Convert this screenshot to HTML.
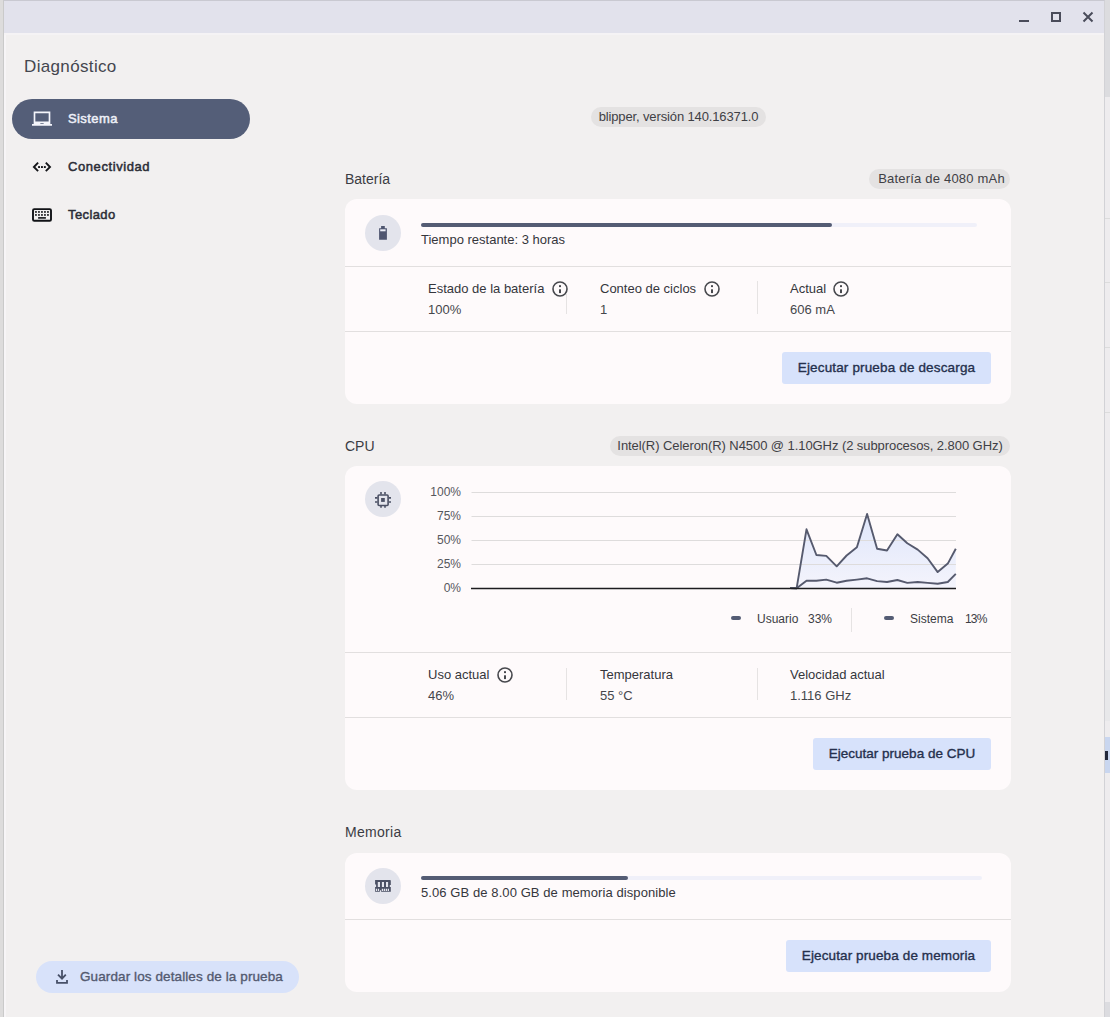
<!DOCTYPE html>
<html><head><meta charset="utf-8">
<style>
*{margin:0;padding:0;box-sizing:border-box}
html,body{width:1110px;height:1017px;overflow:hidden;background:#dddcdc;font-family:"Liberation Sans",sans-serif}
.abs{position:absolute}
#win{position:absolute;left:3px;top:0;width:1102px;height:1017px;background:#f2f0f0;border-left:1px solid #cacaca;border-right:1px solid #d2d2d6;border-top:1px solid #c9c9d1}
#title{position:absolute;left:4px;top:1px;width:1100px;height:32px;background:#e2e2ec}
.t{position:absolute;white-space:nowrap;line-height:1}
.nav-t{font-size:13px;-webkit-text-stroke:0.5px currentColor;letter-spacing:0.4px;color:#2b2d36}
.sec-t{font-size:14px;color:#3b3c43}
.chip{position:absolute;height:20px;border-radius:10px;background:#e4e2e2;color:#3f4045;font-size:13px;line-height:20px;white-space:nowrap}
.card{position:absolute;left:345px;width:666px;background:#fefafb;border-radius:12px}
.hr{position:absolute;left:345px;width:666px;height:1px;background:#e2dfdf}
.circ{position:absolute;left:365px;width:36px;height:36px;border-radius:50%;background:#e3e4ec}
.lbl{font-size:13px;color:#35363c}
.val{font-size:13px;color:#45464b}
.vsep{position:absolute;width:1px;background:#e6e3e3}
.btn{position:absolute;height:32px;border-radius:3px;background:#d7e2fb;color:#25304d;font-size:13.5px;-webkit-text-stroke:0.35px currentColor;line-height:32px;text-align:center;white-space:nowrap}
.track{position:absolute;left:421px;width:560px;height:4px;border-radius:2px;background:#f0f0f9}
.fill{position:absolute;left:0;top:0;height:4px;border-radius:2px;background:#545c74}
</style></head><body>
<div id="win"></div>
<div class="abs" style="left:4px;top:33px;width:2px;height:984px;background:#f7f5f7"></div>
<div id="title"></div>
<div class="abs" style="left:4px;top:33px;width:1100px;height:2px;background:#f5f3f5"></div>
<!-- window controls -->
<div class="abs" style="left:1019px;top:20px;width:10px;height:2px;background:#4a4c5a"></div>
<div class="abs" style="left:1051px;top:12px;width:10px;height:10px;border:2px solid #4a4c5a"></div>
<svg class="abs" style="left:1082px;top:11px" width="12" height="12" viewBox="0 0 12 12"><path d="M1.5 1.5L10.5 10.5M10.5 1.5L1.5 10.5" stroke="#4a4c5a" stroke-width="2"/></svg>

<!-- sidebar -->
<div class="t" style="left:24px;top:58px;font-size:17px;letter-spacing:0.35px;color:#44464f">Diagnóstico</div>
<div class="abs" style="left:12px;top:99px;width:238px;height:40px;border-radius:20px;background:#545e78"></div>
<div class="t nav-t" style="left:68px;top:112px;color:#eef0f8">Sistema</div>
<div class="t nav-t" style="left:68px;top:160px;letter-spacing:0.58px">Conectividad</div>
<div class="t nav-t" style="left:68px;top:208px">Teclado</div>

<div class="abs" style="left:36px;top:961px;width:263px;height:32px;border-radius:16px;background:#d8e2fa"></div>
<div class="t" style="left:80px;top:970px;font-size:13.5px;-webkit-text-stroke:0.35px currentColor;letter-spacing:0.1px;color:#535a70">Guardar los detalles de la prueba</div>

<!-- version chip -->
<div class="chip" style="left:591px;top:107px;width:175px;text-align:center;letter-spacing:-0.13px">blipper, versión 140.16371.0</div>

<!-- Battery -->
<div class="t sec-t" style="left:345px;top:172px">Batería</div>
<div class="chip" style="left:869px;top:169px;width:141px;padding-left:4px;text-align:center;letter-spacing:0.2px">Batería de 4080 mAh</div>
<div class="card" style="top:199px;height:205px"></div>
<div class="circ" style="top:215px"></div>
<div class="track" style="top:223px;width:556px"><div class="fill" style="width:411px"></div></div>
<div class="t lbl" style="left:421px;top:233px">Tiempo restante: 3 horas</div>
<div class="hr" style="top:266px"></div>
<div class="t lbl" style="left:428px;top:282px">Estado de la batería</div>
<div class="t val" style="left:428px;top:303px">100%</div>
<div class="vsep" style="left:566px;top:294px;height:20px"></div>
<div class="t lbl" style="left:600px;top:282px">Conteo de ciclos</div>
<div class="t val" style="left:600px;top:303px">1</div>
<div class="vsep" style="left:757px;top:281px;height:33px"></div>
<div class="t lbl" style="left:790px;top:282px">Actual</div>
<div class="t val" style="left:790px;top:303px">606 mA</div>
<div class="hr" style="top:331px"></div>
<div class="btn" style="left:782px;top:352px;width:209px;letter-spacing:0.15px">Ejecutar prueba de descarga</div>

<!-- CPU -->
<div class="t sec-t" style="left:345px;top:439px">CPU</div>
<div class="chip" style="left:610px;top:436px;width:400px;text-align:center;letter-spacing:-0.07px">Intel(R) Celeron(R) N4500 @ 1.10GHz (2 subprocesos, 2.800 GHz)</div>
<div class="card" style="top:466px;height:324px"></div>
<div class="circ" style="top:481px"></div>
<div class="hr" style="top:652px"></div>
<div class="t lbl" style="left:428px;top:668px">Uso actual</div>
<div class="t val" style="left:428px;top:689px">46%</div>
<div class="vsep" style="left:566px;top:668px;height:32px"></div>
<div class="t lbl" style="left:600px;top:668px">Temperatura</div>
<div class="t val" style="left:600px;top:689px">55 °C</div>
<div class="vsep" style="left:757px;top:668px;height:32px"></div>
<div class="t lbl" style="left:790px;top:668px">Velocidad actual</div>
<div class="t val" style="left:790px;top:689px">1.116 GHz</div>
<div class="hr" style="top:717px"></div>
<div class="btn" style="left:813px;top:738px;width:178px">Ejecutar prueba de CPU</div>

<!-- Memory -->
<div class="t sec-t" style="left:345px;top:825px;letter-spacing:0.3px">Memoria</div>
<div class="card" style="top:853px;height:139px"></div>
<div class="circ" style="top:868px"></div>
<div class="track" style="top:876px;width:561px"><div class="fill" style="width:207px"></div></div>
<div class="t lbl" style="left:421px;top:886px;letter-spacing:0.085px">5.06 GB de 8.00 GB de memoria disponible</div>
<div class="hr" style="top:919px"></div>
<div class="btn" style="left:786px;top:940px;width:205px;letter-spacing:0.12px">Ejecutar prueba de memoria</div>


<!-- nav icons -->
<svg class="abs" style="left:32px;top:109px" width="20" height="20" viewBox="0 0 24 24"><path fill="#f4f5fb" d="M22 18V3H2v15H0v2h24v-2h-2zm-8 0h-4v-1h4v1zm6-3H4V5h16v10z"/></svg>
<svg class="abs" style="left:28px;top:156px" width="28" height="22" viewBox="0 0 28 22"><path d="M38.1 162.7L33.9 167L38.1 171.1M45.8 162.7L50 167L45.8 171.1" transform="translate(-28,-156)" fill="none" stroke="#15161a" stroke-width="1.9" stroke-linecap="butt" stroke-linejoin="miter"/><rect x="10.1" y="10.1" width="1.9" height="1.9" fill="#15161a"/><rect x="13" y="10.1" width="1.9" height="1.9" fill="#15161a"/><rect x="15.9" y="10.1" width="1.9" height="1.9" fill="#15161a"/></svg>
<svg class="abs" style="left:28px;top:202px" width="28" height="24" viewBox="0 0 28 24"><rect x="5" y="7.1" width="18" height="11.6" rx="1.3" fill="none" stroke="#111216" stroke-width="1.9"/><g fill="#111216"><rect x="7.1" y="9.1" width="1.7" height="1.7"/><rect x="10.1" y="9.1" width="1.7" height="1.7"/><rect x="13.1" y="9.1" width="1.7" height="1.7"/><rect x="16.1" y="9.1" width="1.7" height="1.7"/><rect x="19.1" y="9.1" width="1.7" height="1.7"/><rect x="7.1" y="12.1" width="1.7" height="1.7"/><rect x="10.1" y="12.1" width="1.7" height="1.7"/><rect x="13.1" y="12.1" width="1.7" height="1.7"/><rect x="16.1" y="12.1" width="1.7" height="1.7"/><rect x="19.1" y="12.1" width="1.7" height="1.7"/><rect x="10.1" y="15.1" width="7.8" height="1.6"/></g></svg>
<!-- download icon -->
<svg class="abs" style="left:50px;top:964px" width="24" height="24" viewBox="0 0 24 24"><path d="M12 6V15M8 10.6L12 14.6L15.8 10.6M7 16V18.8H17V16" fill="none" stroke="#475068" stroke-width="1.8"/></svg>
<!-- battery icon -->
<svg class="abs" style="left:370px;top:220px" width="26" height="26" viewBox="0 0 26 26"><path fill="#4f5670" d="M11.1 6H14.8V8.2H16.9V19.8H9.1V8.2H11.1Z"/><rect x="10.2" y="9.3" width="5.4" height="2" fill="#eceef8"/></svg>
<!-- cpu icon -->
<svg class="abs" style="left:370px;top:486px" width="26" height="26" viewBox="0 0 26 26"><rect x="8.1" y="9" width="10" height="10.5" rx="1" fill="none" stroke="#4b5064" stroke-width="1.6"/><rect x="11.1" y="12" width="3.7" height="3.9" fill="#4b5064"/><g stroke="#4b5064" stroke-width="1.6"><path d="M11 6.1V8.4M15 6.1V8.4M11 20V21.7M15 20V21.7M5 11.9H7.5M5 16H7.5M18.8 11.9H21M18.8 16H21"/></g></svg>
<!-- memory icon -->
<svg class="abs" style="left:370px;top:873px" width="26" height="26" viewBox="0 0 26 26"><path fill="#4b5064" fill-rule="evenodd" d="M5.1 7H20Q20.8 7 20.8 7.8V11.9H19.8V14.1H20.8V18.8H11.1V17.2H9.9V18.8H5.1V14.1H6.1V11.6H5.1Z M7.8 8.9H10V13.9H7.8Z M11.9 8.9H14V13.9H11.9Z M16 8.9H18.1V13.9H16Z M5.9 15.7H7.1V18H5.9Z M7.9 15.7H9.1V18H7.9Z M11.8 15.7H13.1V18H11.8Z M13.8 15.7H15.1V18H13.8Z M15.8 15.7H17.1V18H15.8Z M17.8 15.7H19V18H17.8Z"/></svg>
<svg class="abs" style="left:550px;top:279px" width="20" height="20" viewBox="0 0 20 20"><circle cx="10" cy="10" r="7" fill="none" stroke="#47484d" stroke-width="1.6"/><rect x="9" y="6.2" width="2" height="1.9" fill="#47484d"/><rect x="9" y="10.3" width="2" height="3.8" fill="#47484d"/></svg>
<svg class="abs" style="left:702px;top:279px" width="20" height="20" viewBox="0 0 20 20"><circle cx="10" cy="10" r="7" fill="none" stroke="#47484d" stroke-width="1.6"/><rect x="9" y="6.2" width="2" height="1.9" fill="#47484d"/><rect x="9" y="10.3" width="2" height="3.8" fill="#47484d"/></svg>
<svg class="abs" style="left:831px;top:279px" width="20" height="20" viewBox="0 0 20 20"><circle cx="10" cy="10" r="7" fill="none" stroke="#47484d" stroke-width="1.6"/><rect x="9" y="6.2" width="2" height="1.9" fill="#47484d"/><rect x="9" y="10.3" width="2" height="3.8" fill="#47484d"/></svg>
<svg class="abs" style="left:495px;top:665px" width="20" height="20" viewBox="0 0 20 20"><circle cx="10" cy="10" r="7" fill="none" stroke="#47484d" stroke-width="1.6"/><rect x="9" y="6.2" width="2" height="1.9" fill="#47484d"/><rect x="9" y="10.3" width="2" height="3.8" fill="#47484d"/></svg>
<!-- chart -->
<div class="t" style="left:420px;top:486px;width:41px;text-align:right;font-size:12px;color:#56575d">100%</div>
<div class="t" style="left:420px;top:510px;width:41px;text-align:right;font-size:12px;color:#56575d">75%</div>
<div class="t" style="left:420px;top:534px;width:41px;text-align:right;font-size:12px;color:#56575d">50%</div>
<div class="t" style="left:420px;top:558px;width:41px;text-align:right;font-size:12px;color:#56575d">25%</div>
<div class="t" style="left:420px;top:582px;width:41px;text-align:right;font-size:12px;color:#56575d">0%</div>
<svg class="abs" style="left:0;top:0" width="1110" height="1017" viewBox="0 0 1110 1017">
<defs><linearGradient id="g" x1="0" y1="492" x2="0" y2="588" gradientUnits="userSpaceOnUse"><stop offset="0" stop-color="#d8e1fa"/><stop offset="1" stop-color="#f4f4fc"/></linearGradient></defs>
<polygon fill="url(#g)" points="790.0,588.0 796.6,588.3 806.5,529.3 816.4,555.0 826.3,555.9 836.7,566.3 846.6,555.5 856.9,547.3 867.1,514.0 877.1,548.7 887.0,550.5 897.4,534.3 907.3,543.3 917.7,549.6 927.6,558.2 937.7,572.1 947.8,563.6 955.8,548.7 955.8,588.3"/>
<g stroke="#dedcdc" stroke-width="1"><path d="M471.5 492.5H956M471.5 516.5H956M471.5 540.5H956M471.5 564.5H956"/></g>
<polyline fill="none" stroke="#565a6e" stroke-width="1.9" stroke-linejoin="round" points="790.0,588.0 796.6,588.3 806.5,529.3 816.4,555.0 826.3,555.9 836.7,566.3 846.6,555.5 856.9,547.3 867.1,514.0 877.1,548.7 887.0,550.5 897.4,534.3 907.3,543.3 917.7,549.6 927.6,558.2 937.7,572.1 947.8,563.6 955.8,548.7"/>
<polyline fill="none" stroke="#565a6e" stroke-width="1.9" stroke-linejoin="round" points="790.0,588.0 796.6,588.3 806.5,580.7 816.4,580.7 826.3,579.6 836.7,582.7 846.6,580.7 856.9,579.6 867.1,578.3 877.1,581.1 887.0,582.0 897.4,580.0 907.3,582.9 917.7,582.0 927.6,582.9 937.7,583.8 947.8,582.0 955.8,573.9"/>
<path d="M471 588.5H956" stroke="#1c1c1f" stroke-width="1.5"/>
</svg>
<!-- legend -->
<div class="abs" style="left:731px;top:616px;width:10px;height:4px;border-radius:2px;background:#545c74"></div>
<div class="t" style="left:757px;top:613px;font-size:12px;color:#3c3d44">Usuario</div>
<div class="t" style="left:808px;top:613px;font-size:12px;color:#3c3d44">33%</div>
<div class="vsep" style="left:851px;top:608px;height:24px"></div>
<div class="abs" style="left:884px;top:616px;width:10px;height:4px;border-radius:2px;background:#545c74"></div>
<div class="t" style="left:910px;top:613px;font-size:12px;color:#3c3d44">Sistema</div>
<div class="t" style="left:965px;top:613px;font-size:12px;letter-spacing:-0.8px;color:#3c3d44">13%</div>

<!-- background window at right edge -->
<div class="abs" style="left:1105px;top:0;width:5px;height:97px;background:#dcdcdf"></div>
<div class="abs" style="left:1105px;top:97px;width:5px;height:920px;background:#eeecee"></div>
<div class="abs" style="left:1105px;top:218px;width:5px;height:1px;background:#dcdcdc"></div>
<div class="abs" style="left:1105px;top:282px;width:5px;height:1px;background:#dcdcdc"></div>
<div class="abs" style="left:1105px;top:347px;width:5px;height:1px;background:#dcdcdc"></div>
<div class="abs" style="left:1105px;top:412px;width:5px;height:1px;background:#dcdcdc"></div>
<div class="abs" style="left:1105px;top:670px;width:5px;height:51px;background:#e8e8ea"></div>
<div class="abs" style="left:1105px;top:737px;width:5px;height:36px;background:#c9d6ef"></div>
<div class="abs" style="left:1105px;top:751px;width:3px;height:9px;background:#22283a"></div>
<div class="abs" style="left:1105px;top:1002px;width:5px;height:15px;background:#dcdce0"></div>
</body></html>
